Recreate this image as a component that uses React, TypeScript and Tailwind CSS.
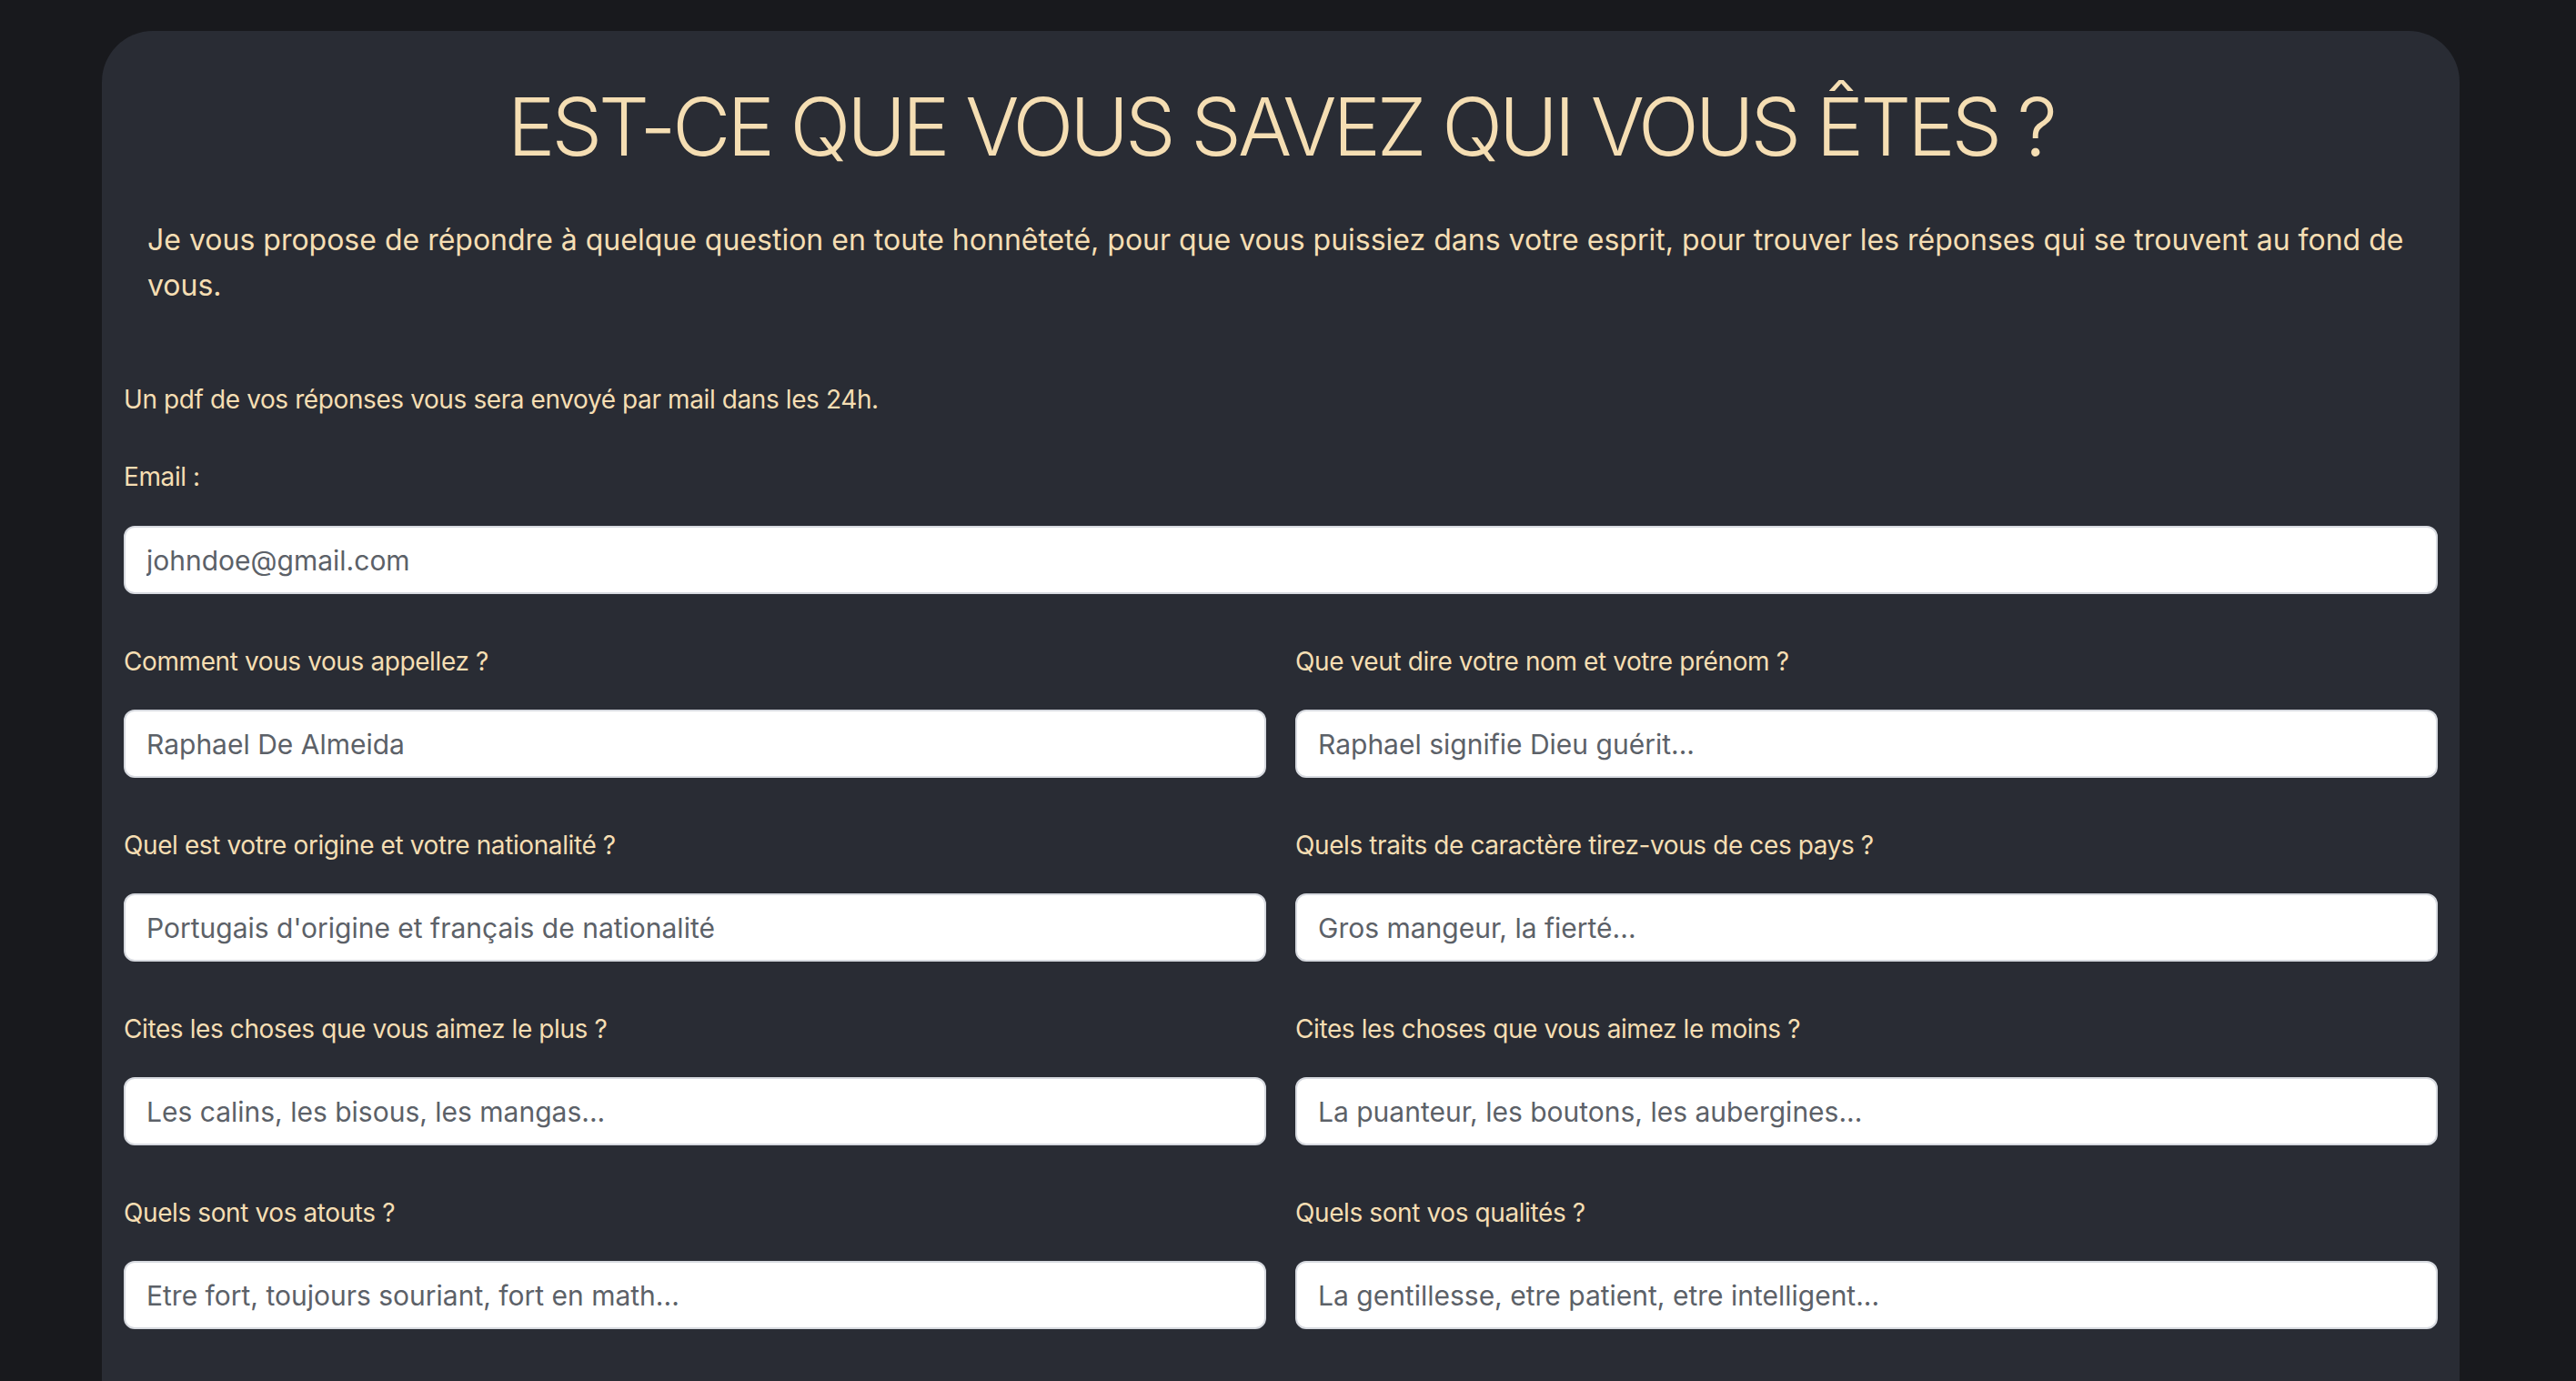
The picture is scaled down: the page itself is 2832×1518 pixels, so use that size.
import type { ReactNode } from "react";

const questions: { label: string; placeholder: string }[][] = [
  [
    { label: "Comment vous vous appellez ?", placeholder: "Raphael De Almeida" },
    { label: "Que veut dire votre nom et votre prénom ?", placeholder: "Raphael signifie Dieu guérit..." },
  ],
  [
    { label: "Quel est votre origine et votre nationalité ?", placeholder: "Portugais d'origine et français de nationalité" },
    { label: "Quels traits de caractère tirez-vous de ces pays ?", placeholder: "Gros mangeur, la fierté..." },
  ],
  [
    { label: "Cites les choses que vous aimez le plus ?", placeholder: "Les calins, les bisous, les mangas..." },
    { label: "Cites les choses que vous aimez le moins ?", placeholder: "La puanteur, les boutons, les aubergines..." },
  ],
  [
    { label: "Quels sont vos atouts ?", placeholder: "Etre fort, toujours souriant, fort en math..." },
    { label: "Quels sont vos qualités ?", placeholder: "La gentillesse, etre patient, etre intelligent..." },
  ],
];

function Label({ children }: { children: ReactNode }) {
  return (
    <label className="block text-[28px] leading-[36px] tracking-[-0.4px] text-[#f5deb3]">{children}</label>
  );
}

function Field({ label, placeholder }: { label: string; placeholder: string }) {
  return (
    <div className="flex flex-col">
      <Label>{label}</Label>
      <input
        type="text"
        placeholder={placeholder}
        className="mt-[35px] h-[75px] w-full rounded-[12px] border-2 border-[#d7dae0] bg-white px-[23px] text-[30px] text-[#212529] outline-none placeholder:text-[#5c6168]"
      />
    </div>
  );
}

export default function App() {
  return (
    <div
      className="min-h-screen overflow-hidden bg-[#18191d] pl-[112px] pt-[34px]"
      style={{ fontFamily: "Inter, 'Noto Sans', sans-serif" }}
    >
      <div className="w-[2592px] rounded-[56px] bg-[#292c34] px-[24px] pb-[200px]">
        <h1 className="pt-[61px] text-center text-[88px] font-light leading-[88px] tracking-[-4px] text-[#f5deb3]">
          EST-CE QUE VOUS SAVEZ QUI VOUS ÊTES ?
        </h1>

        <p className="mt-[56px] px-[26px] text-[32px] leading-[50px] text-[#f5deb3]">
          Je vous propose de répondre à quelque question en toute honnêteté, pour que vous puissiez dans votre
          esprit, pour trouver les réponses qui se trouvent au fond de vous.
        </p>

        <form className="mt-[82px] flex flex-col" onSubmit={(e) => e.preventDefault()}>
          <Label>Un pdf de vos réponses vous sera envoyé par mail dans les 24h.</Label>

          <div className="mt-[49px]">
            <Label>Email :</Label>
            <input
              type="email"
              placeholder="johndoe@gmail.com"
              className="mt-[36px] h-[75px] w-full rounded-[12px] border-2 border-[#d7dae0] bg-white px-[23px] text-[30px] text-[#212529] outline-none placeholder:text-[#5c6168]"
            />
          </div>

          {questions.map((row, i) => (
            <div key={i} className="mt-[56px] grid grid-cols-2 gap-x-[32px]">
              {row.map((q) => (
                <Field key={q.label} label={q.label} placeholder={q.placeholder} />
              ))}
            </div>
          ))}
        </form>
      </div>
    </div>
  );
}
